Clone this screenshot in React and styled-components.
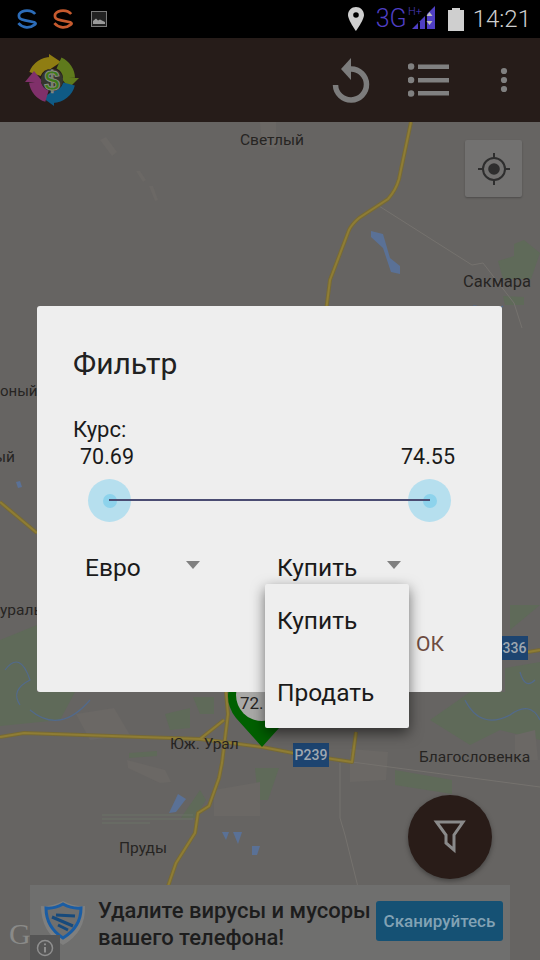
import React from "react";
import styled, { createGlobalStyle } from "styled-components";

const GlobalStyle = createGlobalStyle`
  html, body {
    margin: 0;
    padding: 0;
    background: #000;
  }
  body {
    font-family: Roboto, "Noto Sans", sans-serif;
  }
`;

const Page = styled.div`
  width: 540px;
  height: 960px;
  display: flex;
  flex-direction: column;
  position: relative;
  overflow: hidden;
`;

const StatusBar = styled.div`
  height: 38px;
  background: #000;
  display: flex;
  align-items: center;
  padding: 0 9px 0 17px;
  flex-shrink: 0;
`;

const StatusLeft = styled.div`
  display: flex;
  align-items: center;
  gap: 16px;
  flex: 1;
`;

const NetworkText = styled.span`
  font-size: 25px;
  font-weight: 300;
  color: #4f3fc4;
  line-height: 38px;
  margin-left: 12px;
`;

const Clock = styled.span`
  font-size: 24px;
  font-weight: 300;
  color: #cfcfcf;
  margin-left: 9px;
`;

const Toolbar = styled.div`
  height: 84px;
  background: #261c19;
  display: flex;
  align-items: center;
  padding: 0 24px;
  flex-shrink: 0;
`;

const ToolbarActions = styled.div`
  margin-left: auto;
  display: flex;
  align-items: center;
  margin-right: 8px;
`;

const MapArea = styled.div`
  flex: 1;
  position: relative;
  background: #666462;
  overflow: hidden;
`;

const MapDrawing = styled.svg`
  display: block;
  width: 540px;
  height: 838px;
`;

const MapLabel = styled.span`
  position: absolute;
  left: ${(p) => p.$x}px;
  top: ${(p) => p.$y - 122}px;
  font-size: ${(p) => p.$size || 15.5}px;
  line-height: 20px;
  color: #262422;
  white-space: nowrap;
`;

const RoadShield = styled.span`
  position: absolute;
  left: ${(p) => p.$x}px;
  top: ${(p) => p.$y - 122}px;
  width: ${(p) => p.$w}px;
  height: 24px;
  background: #1d4470;
  color: #a0a8b0;
  font-size: 14px;
  font-weight: 500;
  line-height: 24px;
  text-align: center;
`;

const LocateButton = styled.div`
  position: absolute;
  left: 465px;
  top: 18px;
  width: 57px;
  height: 57px;
  border-radius: 2px;
  background: #727170;
  box-shadow: 0 1px 2px rgba(0, 0, 0, 0.25);
  display: flex;
  align-items: center;
  justify-content: center;
`;

const Fab = styled.div`
  position: absolute;
  left: 408px;
  top: 673px;
  width: 84px;
  height: 84px;
  border-radius: 50%;
  background: #291c18;
  box-shadow: 0 2px 5px rgba(0, 0, 0, 0.35);
  display: flex;
  align-items: center;
  justify-content: center;
`;

const GoogleMark = styled.span`
  position: absolute;
  left: 9px;
  top: 790px;
  font-family: "Liberation Serif", serif;
  font-size: 30px;
  line-height: 44px;
  color: #8a8a88;
`;

const AdBanner = styled.div`
  position: absolute;
  left: 30px;
  bottom: 0;
  width: 480px;
  height: 75px;
  background: #6f6f6e;
  display: flex;
  align-items: center;
  padding: 0 7px 0 10px;
  box-sizing: border-box;
`;

const AdText = styled.div`
  margin-left: 12px;
  padding-top: 2px;
  width: 270px;
  font-size: 22px;
  font-weight: 500;
  line-height: 27px;
  color: #1d1d1d;
  white-space: nowrap;
`;

const AdButton = styled.div`
  margin-left: auto;
  width: 127px;
  height: 40px;
  border-radius: 3px;
  background: #155174;
  color: #82a2b4;
  font-size: 17px;
  font-weight: 500;
  line-height: 40px;
  text-align: center;
  margin-top: -4px;
`;

const AdInfo = styled.div`
  position: absolute;
  left: 0;
  bottom: 0;
  width: 30px;
  height: 25px;
  background: #555;
  display: flex;
  align-items: center;
  justify-content: center;
`;

const Dialog = styled.div`
  position: absolute;
  left: 37px;
  top: 306px;
  width: 465px;
  height: 386px;
  box-sizing: border-box;
  padding: 40px 47px 0 36px;
  background: #eeeeee;
  border-radius: 3px;
  display: flex;
  flex-direction: column;
`;

const DialogTitle = styled.div`
  font-size: 30px;
  line-height: 36px;
  color: #212121;
`;

const RateLabel = styled.div`
  margin-top: 34px;
  font-size: 22px;
  line-height: 28px;
  color: #1a1a1a;
`;

const RateValues = styled.div`
  display: flex;
  justify-content: space-between;
  padding-left: 7px;
  font-size: 21.5px;
  line-height: 26px;
  color: #1a1a1a;
`;

const Slider = styled.div`
  position: relative;
  margin: 9px 4px 0 15px;
  display: flex;
  justify-content: space-between;
`;

const SliderLine = styled.div`
  position: absolute;
  left: 21px;
  right: 21px;
  top: 20px;
  height: 2px;
  background: #4a4c72;
`;

const Thumb = styled.div`
  width: 43px;
  height: 43px;
  border-radius: 50%;
  background: #b6dfee;
  display: flex;
  align-items: center;
  justify-content: center;

  &::after {
    content: "";
    width: 14px;
    height: 14px;
    border-radius: 50%;
    background: #8dd3ec;
  }
`;

const SpinnerRow = styled.div`
  margin-top: 21px;
  padding-left: 12px;
  display: flex;
  gap: 77px;
`;

const Spinner = styled.div`
  position: relative;
  width: ${(p) => p.$width}px;
  height: 48px;
  display: flex;
  align-items: center;
  justify-content: space-between;
  font-size: 24.5px;
  color: #1a1a1a;
`;

const Caret = styled.span`
  width: 0;
  height: 0;
  border-left: 7px solid transparent;
  border-right: 7px solid transparent;
  border-top: 8px solid #808080;
  margin-top: -5px;
`;

const SpinnerMenu = styled.div`
  position: absolute;
  left: -12px;
  top: 41px;
  width: 144px;
  background: #eeeeee;
  border-radius: 2px;
  box-shadow: 0 5px 14px rgba(0, 0, 0, 0.55);
  z-index: 2;
`;

const MenuItem = styled.div`
  height: 72px;
  display: flex;
  align-items: center;
  padding-left: 12px;
  font-size: 24.5px;
  color: #1a1a1a;
`;

const DialogActions = styled.div`
  margin-top: 39px;
  display: flex;
  justify-content: flex-end;
  padding-right: 11px;
`;

const OkButton = styled.span`
  font-size: 21px;
  line-height: 28px;
  color: #6d4c41;
`;

const ROADS = [
  "M411 122 L399 179 Q396 190 388 199 L359 218 Q352 224 349 230 L330 280 L326 311",
  "M0 737 L24 733 L200 739 L224 720 M200 739 L262 747 L293 753 L352 762 L356 732",
  "M226 692 L228 714 L222 763 L219 778 L209 806 L198 813 L195 833 L176 863 L165 895",
  "M0 502 L37 533",
  "M528 652 L540 650",
];

const THIN_LINES = [
  "M379 206 L472 265 L483 263 L514 303 L522 328",
  "M352 762 L540 787",
  "M340 763 V818 L345 835 L357 883 L362 905",
];

const GREENS = [
  "M514 244 L524 240 L540 253 L531 279 L503 279 L498 261 L514 256 Z",
  "M503 296 L524 297 L524 305 L505 305 Z",
  "M510 605 L540 605 L510 630 Z",
  "M0 640 L37 625 V700 L0 712 Z",
  "M0 692 H75 L60 720 L0 726 Z",
  "M193 697 L214 697 L214 714 L200 714 Z",
  "M165 714 L190 708 L190 728 L170 730 Z",
  "M395 770 L452 780 L452 794 L395 785 Z",
  "M255 768 H279 L268 800 H258 Z",
  "M129 753 L157 751 V756 L129 758 Z",
  "M181 818 L200 790 L206 800 L195 818 Z",
  "M430 720 L470 692 H540 V740 L500 730 L470 745 Z",
  "M505 668 L540 662 V692 H505 Z",
];

const PATCHES = [
  "M100 140 L106 137 L117 152 L112 156 Z",
  "M136 171 L140 171 L146 180 L143 182 Z",
  "M149 186 L153 186 L158 200 L155 201 Z",
  "M260 122 H276 L276 148 L262 146 Z",
  "M76 714 L114 708 L130 735 L90 740 Z",
  "M350 749 L388 752 L386 780 L350 782 Z",
  "M214 790 L260 782 L260 816 L214 816 Z",
  "M127 760 L165 770 L171 782 L160 783 L128 768 Z",
  "M515 735 L535 730 L538 760 L515 760 Z",
];

const WATERS = [
  "M371 231 L383 234 L390 258 L400 266 L400 274 L391 272 L383 248 L371 237 Z",
  "M169 813 L178 794 L186 799 L176 812 Z",
  "M222 832 H229 L226 840 Z",
  "M233 832 H242 L238 844 Z",
  "M252 846 H260 L257 855 H252 Z",
  "M16 482 L20 481 L22 487 L18 488 Z",
];

const STREAMS = [
  "M465 311 L474 306 L497 310 M497 310 L503 306",
  "M5 670 Q20 650 30 680 Q10 690 20 705",
  "M520 672 Q525 690 535 680",
  "M30 710 Q60 735 90 700",
  "M465 700 Q480 730 510 715 Q530 700 540 720",
];

function MapPicture() {
  return (
    <MapDrawing viewBox="0 122 540 838">
      {GREENS.map((d) => (
        <path key={d} d={d} fill="#5f6a59" />
      ))}
      {PATCHES.map((d) => (
        <path key={d} d={d} fill="#6b6865" />
      ))}
      {WATERS.map((d) => (
        <path key={d} d={d} fill="#5a7196" />
      ))}
      {STREAMS.map((d) => (
        <path key={d} d={d} fill="none" stroke="#526a8c" strokeWidth="1.2" />
      ))}
      {THIN_LINES.map((d) => (
        <path key={d} d={d} fill="none" stroke="#75726e" strokeWidth="1" />
      ))}
      <path
        d="M102 815 H193 M102 819 H193 M102 823 H150"
        stroke="#6a7266"
        strokeWidth="1"
      />
      {ROADS.map((d) => (
        <g key={d} fill="none" strokeLinejoin="round">
          <path d={d} stroke="#776a35" strokeWidth="4" />
          <path d={d} stroke="#8f7d34" strokeWidth="2" />
        </g>
      ))}
      <path d="M262 747 L236 718 A34 34 0 1 1 288 718 Z" fill="#006000" />
      <circle cx="262" cy="695" r="26" fill="#a9a9a7" />
    </MapDrawing>
  );
}

function SBadge({ color }) {
  return (
    <svg width="20" height="22" viewBox="16 8 22 23">
      <path
        d="M36 14 C32 9 22 9 18.5 14 C17 19 20 20 25 21 L35 23 C37 24 37 25 35 26 C30 30 23 30 17.5 24"
        fill="none"
        stroke={color}
        strokeWidth="3"
      />
    </svg>
  );
}

function AppLogo() {
  return (
    <svg width="56" height="56" viewBox="23 52 56 56">
      <path d="M34 74 A17 17 0 0 1 50 63" fill="none" stroke="#8f7d12" strokeWidth="12" />
      <path d="M48 54 L60 62 L48 70 Z" fill="#8f7d12" />
      <path d="M58 63 A17 17 0 0 1 68 78" fill="none" stroke="#5f7a1c" strokeWidth="12" />
      <path d="M78 78 L68 88 L60 78 Z" fill="#5f7a1c" />
      <path d="M68 84 A17 17 0 0 1 52 97" fill="none" stroke="#0f5a85" strokeWidth="12" />
      <path d="M53 106 L42 98 L53 90 Z" fill="#0f5a85" />
      <path d="M46 96 A17 17 0 0 1 34 82" fill="none" stroke="#80306a" strokeWidth="12" />
      <path d="M24 82 L33 71 L42 82 Z" fill="#80306a" />
      <circle cx="51" cy="80" r="11" fill="#35362e" />
      <text
        x="51"
        y="90"
        textAnchor="middle"
        fontFamily="Liberation Sans, sans-serif"
        fontWeight="700"
        fontSize="28"
        fill="#3f7a1a"
        stroke="#8a8a84"
        strokeWidth="1"
      >
        $
      </text>
    </svg>
  );
}

function App() {
  return (
    <Page>
      <GlobalStyle />
      <StatusBar>
        <StatusLeft>
          <SBadge color="#2c6cb8" />
          <SBadge color="#c65a2e" />
          <svg width="16" height="16" viewBox="0 0 16 16" style={{ marginLeft: 2 }}>
            <rect x="0.5" y="0.5" width="15" height="15" fill="#222" stroke="#7a7a7a" />
            <path d="M2 13 V10 L5 7.5 L7 9.5 L9 8.5 L14 11 V13 Z" fill="#9a9a9a" />
          </svg>
        </StatusLeft>
        <svg width="16" height="24" viewBox="0 0 16 24">
          <path
            fillRule="evenodd"
            d="M8 0 C3.6 0 0 3.5 0 8 C0 13 8 24 8 24 C8 24 16 13 16 8 C16 3.5 12.4 0 8 0 Z M8 5.2 A2.8 2.8 0 1 1 8 10.8 A2.8 2.8 0 1 1 8 5.2 Z"
            fill="#cfcfcf"
          />
        </svg>
        <NetworkText>3G</NetworkText>
        <svg width="30" height="26" viewBox="0 0 30 26" style={{ marginLeft: -1 }}>
          <path d="M6 23 L29 0 V23 Z" fill="#4f3fc4" />
          <path d="M13 23 V16 M20 23 V8" stroke="#000" strokeWidth="2" />
          <path d="M20.5 10 L23.5 6 L26.5 10 Z M20.5 15 L23.5 19 L26.5 15 Z" fill="#bdbdbd" />
          <text x="2" y="9" fontFamily="Roboto, sans-serif" fontWeight="300" fontSize="11" fill="#4f3fc4">
            H+
          </text>
        </svg>
        <svg width="16" height="23" viewBox="0 0 16 23" style={{ marginLeft: 12 }}>
          <path d="M0 2 H4 V0 H12 V2 H16 V23 H0 Z" fill="#cfcfcf" />
        </svg>
        <Clock>14:21</Clock>
      </StatusBar>
      <Toolbar>
        <AppLogo />
        <ToolbarActions>
          <svg width="38" height="46" viewBox="332 55 38 46">
            <path
              d="M351 67 A15.5 15.5 0 1 1 335.5 83"
              fill="none"
              stroke="#7c7c7c"
              strokeWidth="5.5"
            />
            <path d="M351 56 V78 L341 67 Z" fill="#7c7c7c" />
          </svg>
          <svg width="42" height="36" viewBox="408 62 42 36" style={{ marginLeft: 38 }}>
            <g fill="#808080">
              <circle cx="411" cy="66.5" r="3.3" />
              <circle cx="411" cy="80" r="3.3" />
              <circle cx="411" cy="93.5" r="3.3" />
              <rect x="418" y="64.5" width="31" height="4.5" />
              <rect x="418" y="78" width="31" height="4.5" />
              <rect x="418" y="91" width="31" height="4.5" />
            </g>
          </svg>
          <svg width="8" height="26" viewBox="500 67 8 26" style={{ marginLeft: 50 }}>
            <g fill="#808080">
              <circle cx="504" cy="71" r="3.1" />
              <circle cx="504" cy="80" r="3.1" />
              <circle cx="504" cy="89" r="3.1" />
            </g>
          </svg>
        </ToolbarActions>
      </Toolbar>
      <MapArea>
        <MapPicture />
        <MapLabel $x={240} $y={130}>Светлый</MapLabel>
        <MapLabel $x={463} $y={272} $size={16.5}>Сакмара</MapLabel>
        <MapLabel $x={0} $y={381} $size={15}>оный</MapLabel>
        <MapLabel $x={-6} $y={447}>ый</MapLabel>
        <MapLabel $x={0} $y={600}>ураль</MapLabel>
        <MapLabel $x={240} $y={693} $size={17}>72.</MapLabel>
        <MapLabel $x={170} $y={734}>Юж. Урал</MapLabel>
        <MapLabel $x={419} $y={747}>Благословенка</MapLabel>
        <MapLabel $x={119} $y={838}>Пруды</MapLabel>
        <RoadShield $x={293} $y={743} $w={36}>Р239</RoadShield>
        <RoadShield $x={492} $y={636} $w={36}>Р336</RoadShield>
        <LocateButton>
          <svg width="34" height="34" viewBox="0 0 34 34">
            <circle cx="17" cy="17" r="11" fill="none" stroke="#2e2e2e" strokeWidth="2" />
            <circle cx="17" cy="17" r="5.8" fill="#2e2e2e" />
            <path d="M17 1 V6 M17 28 V33 M1 17 H6 M28 17 H33" stroke="#2e2e2e" strokeWidth="2" />
          </svg>
        </LocateButton>
        <Fab>
          <svg width="34" height="38" viewBox="434 825 34 38">
            <path
              d="M437.5 829 H464 L455 842 V857 L447 850 V842 Z"
              fill="none"
              stroke="#8a8a8a"
              strokeWidth="3"
            />
          </svg>
        </Fab>
        <GoogleMark>G</GoogleMark>
        <AdBanner>
          <svg width="46" height="46" viewBox="40 903 46 46">
            <path
              d="M63 904 Q74 910 85 909 Q86 935 63 948 Q41 935 41 909 Q52 910 63 904 Z"
              fill="#7f7f7e"
            />
            <path
              d="M63 907 Q72 912 81 911 Q81 930 63 941 Q46 930 46 911 Q54 912 63 907 Z"
              fill="#6f6f6e"
              stroke="#1a5da4"
              strokeWidth="3"
            />
            <path d="M52 920 L73 929 M58 928 L68 933 M56 918 L75 919" stroke="#174a7c" strokeWidth="3" />
          </svg>
          <AdText>
            Удалите вирусы и мусоры
            <br />
            вашего телефона!
          </AdText>
          <AdButton>Сканируйтесь</AdButton>
          <AdInfo>
            <svg width="18" height="18" viewBox="0 0 18 18">
              <circle cx="9" cy="9" r="7.5" fill="none" stroke="#8f8f8f" strokeWidth="1.5" />
              <path d="M9 8 V13.5 M9 4.5 V6.3" stroke="#8f8f8f" strokeWidth="2" />
            </svg>
          </AdInfo>
        </AdBanner>
      </MapArea>
      <Dialog>
        <DialogTitle>Фильтр</DialogTitle>
        <RateLabel>Курс:</RateLabel>
        <RateValues>
          <span>70.69</span>
          <span>74.55</span>
        </RateValues>
        <Slider>
          <Thumb />
          <Thumb />
          <SliderLine />
        </Slider>
        <SpinnerRow>
          <Spinner $width={115}>
            Евро
            <Caret />
          </Spinner>
          <Spinner $width={124}>
            Купить
            <Caret />
            <SpinnerMenu>
              <MenuItem>Купить</MenuItem>
              <MenuItem>Продать</MenuItem>
            </SpinnerMenu>
          </Spinner>
        </SpinnerRow>
        <DialogActions>
          <OkButton>ОК</OkButton>
        </DialogActions>
      </Dialog>
    </Page>
  );
}

export default App;
